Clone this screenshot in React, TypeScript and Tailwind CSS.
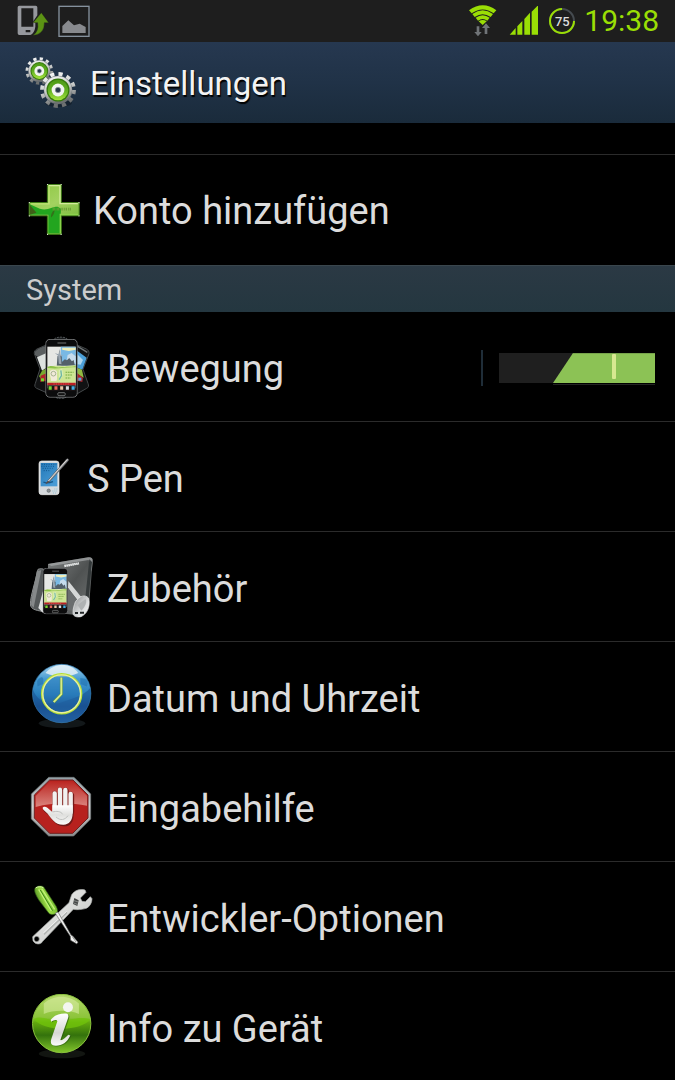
import { useState, type ReactNode } from "react";

function GearsIcon() {
  const gear = (cx: number, cy: number, r: number) => {
    const ring = 2 * Math.PI * r;
    const tooth = ring / 24;
    return (
      <g>
        <circle cx={cx} cy={cy} r={r} fill="none" stroke="url(#gearMetal)" strokeWidth={r * 0.24} strokeDasharray={`${tooth} ${tooth}`} />
        <circle cx={cx} cy={cy} r={r * 0.88} fill="url(#gearMetal)" stroke="#777b7b" strokeWidth="1" />
        <circle cx={cx} cy={cy} r={r * 0.72} fill="#35790b" />
        <circle cx={cx} cy={cy} r={r * 0.64} fill="url(#gearGreen)" />
        <circle cx={cx} cy={cy} r={r * 0.4} fill="#f2f4f1" />
        <circle cx={cx} cy={cy} r={r * 0.17} fill="#27384a" stroke="#8f979b" strokeWidth="2" />
      </g>
    );
  };
  return (
    <svg viewBox="75 168 156 156" className="size-[52px] shrink-0" aria-hidden="true">
      <defs>
        <linearGradient id="gearMetal" x1="0" y1="0" x2="0.3" y2="1">
          <stop offset="0" stopColor="#fafafa" />
          <stop offset="0.55" stopColor="#c9cbca" />
          <stop offset="1" stopColor="#6d7070" />
        </linearGradient>
        <linearGradient id="gearGreen" x1="0" y1="0" x2="0" y2="1">
          <stop offset="0" stopColor="#4d9a16" />
          <stop offset="0.5" stopColor="#5fae20" />
          <stop offset="1" stopColor="#a5e33e" />
        </linearGradient>
      </defs>
      {gear(118, 210, 37)}
      <ellipse cx="176" cy="306" rx="40" ry="12" fill="#101a24" opacity="0.6" />
      {gear(174, 267, 48)}
    </svg>
  );
}

function PlusIcon() {
  return (
    <svg viewBox="84 101 156 160" className="h-[53px] w-[52px] shrink-0" aria-hidden="true">
      <defs>
        <linearGradient id="plusLight" x1="0" y1="0" x2="0.6" y2="1">
          <stop offset="0" stopColor="#8cc63f" />
          <stop offset="0.5" stopColor="#a3d260" />
          <stop offset="1" stopColor="#76b83a" />
        </linearGradient>
      </defs>
      <path d="M142 102h42v55h54v40h-54v56h-42v-56H87v-40h55z" fill="url(#plusLight)" stroke="#3e7d17" strokeWidth="3" />
      <path d="M89 162l30 14c25 7 38-7 54-6l10 6-3 74h-35v-56H90z" fill="#22a51f" />
      <path d="M89 164l20 24-20 6z" fill="#3f5f18" />
      <path d="M146 106h34v54h54" fill="none" stroke="#d3ec9c" strokeWidth="4" />
      <path d="M147 108v53H93" fill="none" stroke="#bfe276" strokeWidth="4" />
      <path d="M235 193h-54v57" fill="none" stroke="#8dd34e" strokeWidth="4" />
      <path d="M153 202c-1-12 6-20 12-25-3 10-2 17-12 25z" fill="#337219" />
      <path d="M158 177h9m3 0h8m4 0h8m3 0h9m3 0h10" stroke="#6b9f35" strokeWidth="8" strokeDasharray="3 2" />
      <path d="M141 102h3m38 0h3M86 157h3m147 0h3M86 197h3m147 0h3M141 253h3m38 0h3" stroke="#e3ead9" strokeWidth="4" />
    </svg>
  );
}

function PhoneScreen({ x, y, w, h }: { x: number; y: number; w: number; h: number }) {
  return (
    <svg x={x} y={y} width={w} height={h} viewBox="0 0 96 176" preserveAspectRatio="none">
      <rect x="1" y="1" width="94" height="174" rx="13" fill="#0c0c0d" stroke="#8b8d8e" strokeWidth="2.5" />
      <path d="M36 12h26" stroke="#707273" strokeWidth="3" />
      <rect x="6" y="23" width="84" height="125" fill="#e6e7e4" />
      <path d="M46 23h44v56H46z" fill="#79b9e4" />
      <path d="M50 26h40v6l-20 4-20-4z" fill="#f0eeb9" />
      <path d="M66 48l12-6 12 10v24H62z" fill="#c6dcec" />
      <path d="M34 80l2-28 4-4 1-18 3 18 5 5v16l9-8 6 3 7-7 8 10 5-4 4 17z" fill="#53606a" />
      <path d="M38 50l-10-8 11 4 5-14 1 15 10 1-10 3 3 25-8-2z" fill="#9ba6b0" />
      <path d="M6 86c15-8 33-6 44-5 15 2 26-4 40-2v54H6z" fill="#cde594" />
      <path d="M6 84c18-8 22 4 40 1 18-3 28 0 44-4v4c-30-2-45 6-84 2z" fill="#8cc048" />
      <path d="M14 96c8-6 18-4 21 3-2 9 2 20-2 27H16c4-8-7-19-2-30z" fill="#f1ead9" />
      <circle cx="24" cy="104" r="7" fill="none" stroke="#849a70" strokeWidth="2" />
      <path d="M40 93l10-3 3 18-12 18z" fill="#dceeb5" />
      <path d="M46 94l2 16-7 12" fill="none" stroke="#6eb6a4" strokeWidth="4" />
      <path d="M60 100h24M60 108h20M60 117h15" stroke="#75a940" strokeWidth="3" strokeDasharray="5 2" />
      <path d="M6 131h84v8H6z" fill="#ba1f24" />
      <path d="M24 135h48" stroke="#dc6a6b" strokeWidth="2" strokeDasharray="4 3" />
      <path d="M6 139h84v16H6z" fill="#1c1516" />
      <path d="M10 142h9v10h-9z" fill="#77d830" />
      <path d="M27 142h9v10h-9z" fill="#ea675a" />
      <path d="M44 142h9v10h-9z" fill="#e9c7a4" />
      <path d="M61 142h9v10h-9z" fill="#d9dce0" />
      <path d="M78 142h9v10h-9z" fill="#42aee5" />
      <rect x="37" y="161" width="22" height="9" rx="3" fill="#141414" stroke="#9b9d9e" strokeWidth="2" />
    </svg>
  );
}

function MotionIcon() {
  return (
    <svg viewBox="30 30 192 192" className="size-16 shrink-0" aria-hidden="true">
      <path d="M103 42c5-7 32-8 39 0v170c-8 13-31 13-39 0z" fill="#1a1c1d" stroke="#4d5254" strokeWidth="3" strokeDasharray="6 3" />
      <path d="M43 86c-1-6 2-11 8-14l30-13 23 130-20 16-34-15c-6-3-7-8-4-15l14-43z" fill="#111213" stroke="#44484a" strokeWidth="3" />
      <path d="M44 81c6-9 21-16 37-19v22L56 98 45 90z" fill="#5b5f60" />
      <path d="M51 97l30-14v44L66 137z" fill="#dde1df" />
      <path d="M66 137l15-7v20l-18 12-6-8z" fill="#78a82f" />
      <path d="M62 152l19-8v24l-21 2z" fill="#af2429" />
      <path d="M63 160h9v9h-9z" fill="#71d92c" />
      <path d="M207 86c1-6-2-11-8-14l-30-13-16 133 19 14 28-16c6-3 7-8 4-15l-15-42z" fill="#111213" stroke="#44484a" strokeWidth="3" />
      <path d="M171 77l29 21-13 36-16-6z" fill="#4ca0d9" />
      <path d="M172 88l17 17-7 14-10-1z" fill="#afd6ed" />
      <path d="M171 128l15 6 5 24-20-10z" fill="#90ba41" />
      <path d="M171 144l18 14-2 13-16-4z" fill="#af2429" />
      <path d="M175 158h9v9h-9z" fill="#56a7d8" />
      <path d="M173 64l29 18" stroke="#6f7577" strokeWidth="4" />
      <PhoneScreen x={76} y={42} w={97} h={176} />
    </svg>
  );
}

function PenIcon() {
  return (
    <svg viewBox="30 15 132 192" className="h-16 w-11 shrink-0" aria-hidden="true">
      <defs>
        <linearGradient id="penScreen" x1="0" y1="0" x2="0.7" y2="1">
          <stop offset="0" stopColor="#2378b8" />
          <stop offset="1" stopColor="#499bd5" />
        </linearGradient>
      </defs>
      <rect x="57" y="63" width="60" height="101" rx="8" fill="#d5d9dc" stroke="#f0f0ef" strokeWidth="2" />
      <rect x="62" y="69" width="50" height="70" fill="url(#penScreen)" />
      <path d="M65 73h44M64 79h38M68 85h30M71 92h18" stroke="#15588f" strokeWidth="3" strokeDasharray="3 4" />
      <path d="M70 126c10 5 18 3 29-1" fill="none" stroke="#16588a" strokeWidth="4" />
      <circle cx="86" cy="152" r="5" fill="#8d9296" stroke="#5f666b" strokeWidth="2" />
      <path d="M97 153h14M99 159h10M103 147h10" stroke="#70b9da" strokeWidth="2" strokeDasharray="3 3" />
      <path d="M78 131l9-13 53-61c3-3 8 1 5 5l-54 60z" fill="#999b9f" stroke="#4e5154" strokeWidth="2" />
      <path d="M85 123l57-65" stroke="#dfd9d4" strokeWidth="3" />
      <path d="M77 131l7-8 5 3z" fill="#5d4944" />
    </svg>
  );
}

function AccessoriesIcon() {
  return (
    <svg viewBox="30 30 192 192" className="size-16 shrink-0" aria-hidden="true">
      <defs>
        <linearGradient id="boxGrey" x1="0" y1="0" x2="1" y2="1">
          <stop offset="0" stopColor="#7d8080" />
          <stop offset="0.5" stopColor="#4f5252" />
          <stop offset="1" stopColor="#737676" />
        </linearGradient>
        <linearGradient id="budGrey" x1="0" y1="0" x2="1" y2="1">
          <stop offset="0" stopColor="#8b8d8e" />
          <stop offset="0.6" stopColor="#dadcdd" />
          <stop offset="1" stopColor="#f8f8f8" />
        </linearGradient>
      </defs>
      <path d="M84 57l121-20c9-1 14 3 13 12l-11 134-35 27-90-8z" fill="url(#boxGrey)" />
      <path d="M84 57l121-20c9-1 14 3 13 12l-3 31-9-35-112 18z" fill="#a7aaab" opacity="0.7" />
      <path d="M208 43l8 8-12 130-11 5z" fill="#34393a" />
      <path d="M133 63l44-8" stroke="#e9ebeb" strokeWidth="7" strokeDasharray="5 1" />
      <path d="M54 73c9-3 15-2 18 1l3 127c-21-5-43-5-44-24 1-27 15-66 23-104z" fill="#545859" stroke="#8e9192" strokeWidth="3" />
      <path d="M50 79l14-4-23 113-7-7c-3-8 10-64 16-102z" fill="#86898a" />
      <path d="M70 135v70l-15-16z" fill="#dfe1e1" />
      <path d="M145 108l38 47-9 12-30-38z" fill="#d5d7d7" />
      <path d="M144 128l32 42-17 27-15-1z" fill="#6a6d6e" />
      <path d="M166 171c12-19 30-24 40-11 6 28-7 48-23 55-17 3-25-3-24-13 0-11 3-20 7-31z" fill="url(#budGrey)" stroke="#eceded" strokeWidth="2" />
      <path d="M173 180l23-18c7 7-1 25-12 35z" fill="#afb2b3" />
      <path d="M165 204h9M180 203h12" stroke="#202425" strokeWidth="6" />
      <PhoneScreen x={68} y={69} w={76} h={139} />
    </svg>
  );
}

function ClockIcon() {
  return (
    <svg viewBox="30 25 192 202" className="h-[67px] w-16 shrink-0" aria-hidden="true">
      <defs>
        <linearGradient id="clockBlue" x1="0" y1="0" x2="0" y2="1">
          <stop offset="0" stopColor="#a9d5ee" />
          <stop offset="0.25" stopColor="#469bd2" />
          <stop offset="0.52" stopColor="#277ebd" />
          <stop offset="0.72" stopColor="#1b5495" />
          <stop offset="1" stopColor="#3378b9" />
        </linearGradient>
      </defs>
      <ellipse cx="126" cy="207" rx="70" ry="14" fill="#121719" />
      <circle cx="125" cy="117" r="88" fill="url(#clockBlue)" stroke="#3983b9" strokeWidth="2" />
      <path d="M38 104c13 39 55 54 96 36 31-12 57-16 77-40 7 64-34 104-86 104S34 164 38 104z" fill="#184e8e" opacity="0.55" />
      <path d="M76 55c28-31 75-32 99 0-29 14-67 15-99 0z" fill="#edf5f8" opacity="0.78" />
      <path d="M51 79c12-18 23-14 17 9l-16 8zM181 71c19-1 27 8 20 25l-19-8z" fill="#1c69a9" opacity="0.5" />
      <circle cx="125" cy="118" r="59" fill="#2a75b4" fillOpacity="0.35" stroke="#b5de35" strokeWidth="7" />
      <circle cx="125" cy="118" r="57" fill="none" stroke="#e8efa0" strokeWidth="4" />
      <path d="M124 69v50l-23 24" fill="none" stroke="#4c8a4d" strokeWidth="9" />
      <path d="M124 69v50l-23 24" fill="none" stroke="#d8ec85" strokeWidth="6" />
    </svg>
  );
}

function StopHandIcon() {
  return (
    <svg viewBox="30 30 192 192" className="size-16 shrink-0" aria-hidden="true">
      <defs>
        <linearGradient id="signSilver" x1="0" y1="0" x2="0" y2="1">
          <stop offset="0" stopColor="#91a0a6" />
          <stop offset="0.5" stopColor="#cfd1d1" />
          <stop offset="1" stopColor="#8b8d8e" />
        </linearGradient>
        <linearGradient id="handWhite" x1="0" y1="0" x2="0" y2="1">
          <stop offset="0" stopColor="#ffffff" />
          <stop offset="0.5" stopColor="#e0e0de" />
          <stop offset="1" stopColor="#fafafa" />
        </linearGradient>
        <linearGradient id="signGloss" x1="0" y1="0" x2="0" y2="1">
          <stop offset="0" stopColor="#bb2722" />
          <stop offset="1" stopColor="#df918a" />
        </linearGradient>
      </defs>
      <path d="M86 37h76l50 50v75l-51 51H86l-52-51V87z" fill="url(#signSilver)" stroke="#777b7d" strokeWidth="2" />
      <path d="M89 45h70l45 45v69l-46 46H89l-46-46V90z" fill="#b7211e" stroke="#702120" strokeWidth="3" />
      <path d="M91 49h66l44 43v30c-49-10-102-11-154 4V93z" fill="url(#signGloss)" opacity="0.9" />
      <g fill="none" stroke="#6e1817" strokeWidth="15" strokeLinecap="round" transform="translate(3 3)">
        <path d="M104 86v50M120 75v50M136 75v50M152 88v50" />
      </g>
      <path d="M97 132l61 0v14c0 22-11 35-27 35-26 1-38-20-48-33l-13-11c-8-9 3-12 11-8l16 12z" fill="#6e1817" transform="translate(3 3)" />
      <g fill="none" stroke="#8f2b27" strokeWidth="15" strokeLinecap="round">
        <path d="M104 85v50M120 74v50M136 75v50M152 87v50" />
      </g>
      <g fill="none" stroke="#f1f1f0" strokeWidth="13" strokeLinecap="round">
        <path d="M104 85v55M120 74v60M136 75v60M152 87v55" />
      </g>
      <path d="M97 141v-20h61v23c0 22-11 35-27 35-26 1-38-20-48-33l-12-11c-8-9 3-12 11-7z" fill="url(#handWhite)" />
      <path d="M98 141c10-3 25-3 30 7M108 156c13 12 27 9 36-4" fill="none" stroke="#bfc1bf" strokeWidth="3" />
    </svg>
  );
}

function ToolsIcon() {
  return (
    <svg viewBox="30 29 192 192" className="size-16 shrink-0" aria-hidden="true">
      <defs>
        <linearGradient id="steel" x1="0" y1="0" x2="1" y2="1">
          <stop offset="0" stopColor="#f5f5f4" />
          <stop offset="0.6" stopColor="#d3d4d2" />
          <stop offset="1" stopColor="#f3f3f2" />
        </linearGradient>
        <linearGradient id="handleGreen" x1="0" y1="0.5" x2="1" y2="0">
          <stop offset="0" stopColor="#3e7a18" />
          <stop offset="0.35" stopColor="#9bdb45" />
          <stop offset="1" stopColor="#559f21" />
        </linearGradient>
      </defs>
      <path fillRule="evenodd" d="M38 184l109-102 8-24c9-13 24-18 40-14l3 7-17 17 5 10 10 1 15-15 5 6c0 13-7 24-17 29-14 4-28 5-39 3L68 198c-6 12-24 9-29-2zm12-1a8 8 0 1 0 0 16 8 8 0 1 0 0-16z" fill="url(#steel)" stroke="#b1b3b1" strokeWidth="2" />
      <path d="M72 177l69-66" stroke="#b4b6b4" strokeWidth="5" />
      <path d="M70 173l70-65" stroke="#ffffff" strokeWidth="2" />
      <path d="M163 68l13 7-4 17-13-6z" fill="#454746" />
      <path d="M162 76l13 4M161 83l11 4" stroke="#a5a7a6" strokeWidth="2" />
      <path d="M45 39c4-7 18-10 26-4l33 51c6 8 10 18 8 24-6 10-21 9-26 3L57 75c-7-12-16-26-12-36z" fill="url(#handleGreen)" stroke="#315f17" strokeWidth="2" />
      <path d="M56 42l38 65M65 40l39 62" stroke="#bff178" strokeWidth="4" />
      <path d="M61 44l37 62" stroke="#3c861c" strokeWidth="3" />
      <path d="M47 38c6-5 16-5 23-1" fill="none" stroke="#d7f6a8" strokeWidth="3" />
      <path d="M106 114l8-4 39 69 5 3 16 19-4 4-18-10-1-12z" fill="#f4f4f3" stroke="#6b6d6b" strokeWidth="2" />
      <path d="M157 184l11 16" stroke="#999b99" strokeWidth="3" />
    </svg>
  );
}

function InfoIcon() {
  return (
    <svg viewBox="30 25 192 202" className="h-[67px] w-16 shrink-0" aria-hidden="true">
      <defs>
        <linearGradient id="infoGreen" x1="0" y1="0" x2="0" y2="1">
          <stop offset="0" stopColor="#b4d86b" />
          <stop offset="0.4" stopColor="#8cc43a" />
          <stop offset="0.48" stopColor="#63a90e" />
          <stop offset="0.7" stopColor="#34720c" />
          <stop offset="1" stopColor="#83c72c" />
        </linearGradient>
        <linearGradient id="infoWhite" x1="0" y1="0" x2="0" y2="1">
          <stop offset="0" stopColor="#ffffff" />
          <stop offset="0.6" stopColor="#d6d7d3" />
          <stop offset="1" stopColor="#fbfbfa" />
        </linearGradient>
      </defs>
      <ellipse cx="126" cy="205" rx="70" ry="14" fill="#121511" />
      <circle cx="125" cy="114" r="88" fill="url(#infoGreen)" stroke="#8bc33d" strokeWidth="3" />
      <path d="M71 85V54c30-28 77-27 106 0v31c-28-13-77-13-106 0z" fill="#dceea8" opacity="0.55" />
      <path d="M39 101c30-15 47 9 85 5 39-4 58-15 87-4-23 31-126 43-172-1z" fill="#71c40b" opacity="0.75" />
      <circle cx="144" cy="65" r="15" fill="#f3f5ef" />
      <path d="M92 103c12-16 31-20 46-19 7 1 9 6 6 14l-23 66c5 2 15-6 24-16l6 2c-9 20-25 31-43 31-15 0-18-8-14-21l18-53c-2-6-9-5-19 2z" fill="#26560c" transform="translate(3 2)" opacity="0.6" />
      <path d="M92 103c12-16 31-20 46-19 7 1 9 6 6 14l-23 66c5 2 15-6 24-16l6 2c-9 20-25 31-43 31-15 0-18-8-14-21l18-53c-2-6-9-5-19 2z" fill="url(#infoWhite)" />
    </svg>
  );
}

function StatusBar() {
  return (
    <div className="flex h-[42px] shrink-0 items-center bg-[#1e1e1e] pr-4 pl-[17px]">
      <svg viewBox="51 15 96 96" className="size-8" role="img" aria-label="Gerät verbunden">
        <path fillRule="evenodd" d="M58 17h49q5 0 5 5v24L99 65l7 3v12q-3 20-15 25H58q-5 0-5-5V22q0-5 5-5zm6 8v55h36V25zm13 65v7h14v-7z" fill="#96989d" />
        <path d="M124 38l22 30h-13q1 34-34 38 18-11 14-38H99z" fill="#5c9314" stroke="#1e1e1e" strokeWidth="1" />
      </svg>
      <svg viewBox="175 14 96 96" className="ml-[9px] size-8" role="img" aria-label="Screenshot">
        <rect x="178" y="18" width="90" height="90" fill="none" stroke="#85919d" strokeWidth="4" />
        <path d="M188 98V77l18-17 17 15 17-5 18 10v18z" fill="#888a8e" />
      </svg>
      <div className="ml-auto flex items-center">
        <svg viewBox="60 15 84 96" className="h-8 w-7" role="img" aria-label="WLAN">
          <path d="M60 31q42-30 82 0l-8 9q-33-23-66 0z" fill="#9ade05" />
          <path d="M70 42q31-22 62 0l-7 9q-24-17-48 0z" fill="#9ade05" />
          <path d="M80 53q21-15 42 0l-7 9q-14-10-28 0z" fill="#9ade05" />
          <path d="M89 64q12-8 24 0l-12 11z" fill="#9ade05" />
          <path d="M83 79h8v17h7l-11 13-11-13h7z" fill="#707478" />
          <path d="M107 102h8V84h8l-12-14-12 14h8z" fill="#707478" />
        </svg>
        <svg viewBox="177 21 90 90" className="ml-3 size-[30px]" role="img" aria-label="Mobilfunksignal">
          <path d="M179 107l18-20v20zM202 82l15-16v41h-15zM223 60l17-19v66h-17zM245 38l19-19v88h-19z" fill="#9ade05" />
        </svg>
        <div className="relative ml-2 grid size-[30px] place-items-center">
          <svg viewBox="0 0 90 90" className="absolute inset-0" aria-hidden="true">
            <circle cx="45" cy="45" r="36" fill="none" stroke="#454b50" strokeWidth="6" />
            <path d="M81 45A36 36 0 1 1 45 9" fill="none" stroke="#9ade05" strokeWidth="6" />
          </svg>
          <span className="text-[13px] leading-none font-medium text-[#dcdcdc]">75</span>
        </div>
        <time className="ml-[7px] text-[30px] leading-none text-[#9ade05]">19:38</time>
      </div>
    </div>
  );
}

function SettingsRow({ id, label, icon, children }: { id: string; label: string; icon: ReactNode; children?: ReactNode }) {
  return (
    <li className="flex h-[110px] items-center border-b border-[#2b2b2b] pr-5 pl-[30px] last:border-b-0">
      <a href={`#${id}`} className="flex flex-1 items-center gap-[13px]">
        {icon}
        <span className="pt-1 text-[38px] leading-[44px]">{label}</span>
      </a>
      {children}
    </li>
  );
}

function MotionSwitch() {
  const [on, setOn] = useState(true);
  return (
    <label className="mt-[3px] flex cursor-pointer items-center border-l-2 border-[#1f2d38] pt-[3px] pl-4">
      <input type="checkbox" role="switch" aria-label="Bewegung ein oder aus" checked={on} onChange={() => setOn(!on)} className="sr-only" />
      <svg viewBox="0 0 156 33" className="h-[33px] w-[156px]" aria-hidden="true">
        <rect width="156" height="30" fill="#1f1f1f" />
        <g transform={on ? undefined : "translate(156 0) scale(-1 1)"}>
          <path d="M74 0h82v30H54z" fill={on ? "#8cc255" : "#555555"} />
          <path d="M74 0.5h82" stroke="#77a34b" />
          <rect x="113" y="1" width="4" height="25" rx="1" fill={on ? "#d7e890" : "#888888"} />
          <path d="M54 31.5h102" stroke="#242424" />
        </g>
      </svg>
    </label>
  );
}

export default function App() {
  return (
    <div className="flex h-screen flex-col overflow-hidden bg-black font-['Roboto','Noto_Sans',sans-serif] text-[#dcdcdc]">
      <StatusBar />
      <header className="flex h-[81px] shrink-0 items-center gap-[13px] bg-linear-to-b from-[#263850] via-[#203247] to-[#1a2b3b] pl-[25px] text-[#f3f3f3]">
        <GearsIcon />
        <h1 className="pt-0.5 text-[33px] leading-10 [text-shadow:1px_2px_1px_#000]">Einstellungen</h1>
      </header>
      <main className="min-h-0 flex-1 overflow-y-auto [scrollbar-width:none]">
        <div className="h-8 border-b border-[#2b2b2b]" />
        <a href="#konto" className="flex h-[110px] items-center gap-[13px] pl-7">
          <PlusIcon />
          <span className="pt-0.5 text-[38px] leading-[44px]">Konto hinzufügen</span>
        </a>
        <h2 className="h-[47px] border-t border-[#3a464d] bg-linear-to-b from-[#2b3944] to-[#243740] pt-1 pl-[26px] text-[29px] leading-10 text-[#cccccc]">System</h2>
        <ul>
          <SettingsRow id="bewegung" label="Bewegung" icon={<MotionIcon />}>
            <MotionSwitch />
          </SettingsRow>
          <SettingsRow id="s-pen" label="S Pen" icon={<PenIcon />} />
          <SettingsRow id="zubehoer" label="Zubehör" icon={<AccessoriesIcon />} />
          <SettingsRow id="datum" label="Datum und Uhrzeit" icon={<ClockIcon />} />
          <SettingsRow id="eingabehilfe" label="Eingabehilfe" icon={<StopHandIcon />} />
          <SettingsRow id="entwickler" label="Entwickler-Optionen" icon={<ToolsIcon />} />
          <SettingsRow id="info" label="Info zu Gerät" icon={<InfoIcon />} />
        </ul>
      </main>
    </div>
  );
}
